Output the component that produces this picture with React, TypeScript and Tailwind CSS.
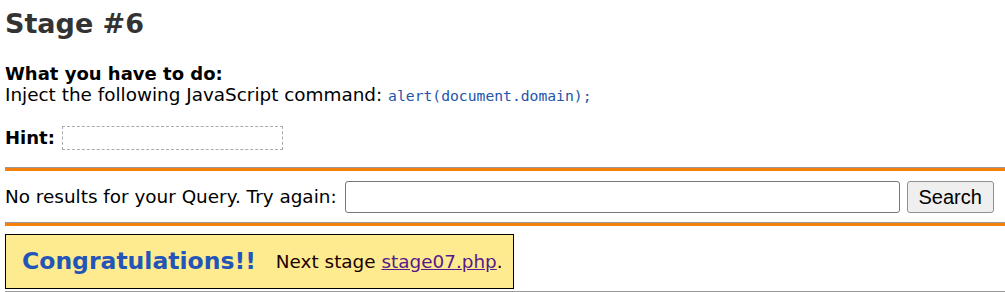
export default function App() {
  return (
    <div className="min-h-screen bg-white pl-[5px] text-[18.4px] text-black [font-family:'DejaVu_Sans',Verdana,sans-serif]">
      <h1 className="pt-[8px] text-[27px] font-bold leading-[32px] text-[#333]">Stage #6</h1>

      <div className="mt-[23px] leading-[21px]">
        <div className="text-[18px] font-bold">What you have to do:</div>
        <div>
          Inject the following JavaScript command:{" "}
          <code className="text-[14.7px] text-[#2255aa] [font-family:'DejaVu_Sans_Mono',monospace]">
            alert(document.domain);
          </code>
        </div>
      </div>

      <div className="mt-[20px] flex items-center gap-[7px] leading-[24px]">
        <span className="text-[18px] font-bold">Hint:</span>
        <span className="h-[24px] w-[221px] border border-dashed border-[#aaa]"></span>
      </div>

      <hr className="mt-[17px] h-[4px] border-0 border-t border-[#999] bg-[#f5800c]" />

      <div className="flex h-[51px] items-center">
        <span>No results for your Query. Try again:</span>
        <input
          type="text"
          className="ml-[8px] h-[32px] w-[555px] rounded-[3px] border border-[#767676] bg-white px-1"
        />
        <button className="ml-[7px] h-[32px] w-[87px] rounded-[3px] border border-[#8f8f8f] bg-[#efefef] text-[20px] [font-family:'Liberation_Sans',Arial,sans-serif]">
          Search
        </button>
      </div>

      <hr className="h-[4px] border-0 border-t border-[#999] bg-[#f5800c]" />

      <div className="mt-[8px] flex h-[55px] w-[509px] items-center border border-black bg-[#ffeb8f] pl-[16px]">
        <span className="text-[23.5px] font-bold text-[#2355b8]">Congratulations!!</span>
        <span className="ml-[20px] text-[#1a0000]">
          Next stage{" "}
          <a href="#" className="text-[#551a8b] underline">
            stage07.php
          </a>
          .
        </span>
      </div>

      <div className="mt-[2px] h-px bg-[#999]"></div>
    </div>
  );
}
